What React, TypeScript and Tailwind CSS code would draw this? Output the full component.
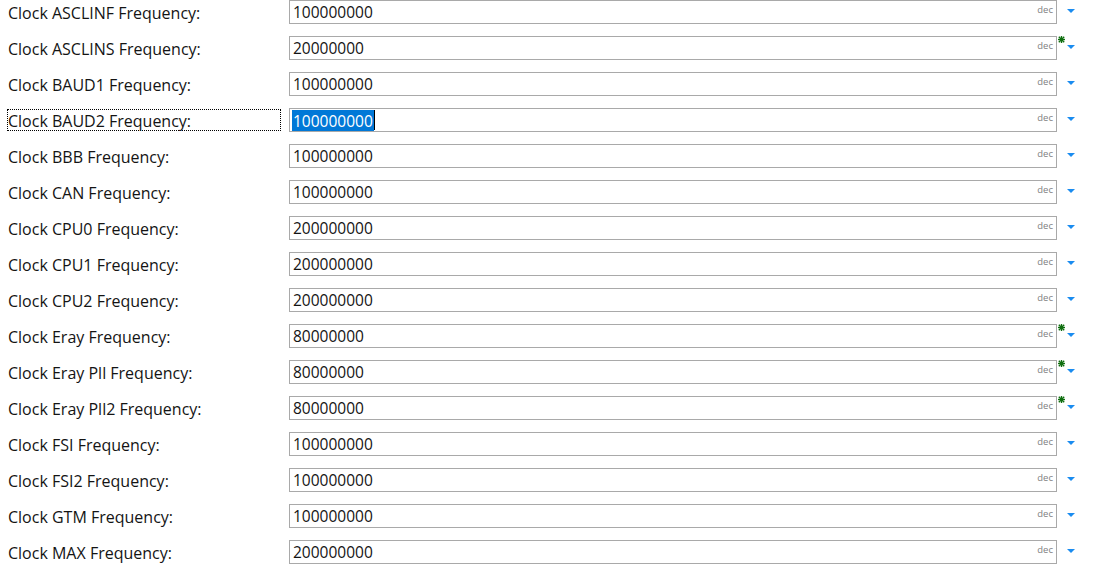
import React from "react";

const rows: { label: string; value: string; star?: boolean; focus?: boolean }[] = [
  { label: "Clock ASCLINF Frequency:", value: "100000000" },
  { label: "Clock ASCLINS Frequency:", value: "20000000", star: true },
  { label: "Clock BAUD1 Frequency:", value: "100000000" },
  { label: "Clock BAUD2 Frequency:", value: "100000000", focus: true },
  { label: "Clock BBB Frequency:", value: "100000000" },
  { label: "Clock CAN Frequency:", value: "100000000" },
  { label: "Clock CPU0 Frequency:", value: "200000000" },
  { label: "Clock CPU1 Frequency:", value: "200000000" },
  { label: "Clock CPU2 Frequency:", value: "200000000" },
  { label: "Clock Eray Frequency:", value: "80000000", star: true },
  { label: "Clock Eray Pll Frequency:", value: "80000000", star: true },
  { label: "Clock Eray Pll2 Frequency:", value: "80000000", star: true },
  { label: "Clock FSI Frequency:", value: "100000000" },
  { label: "Clock FSI2 Frequency:", value: "100000000" },
  { label: "Clock GTM Frequency:", value: "100000000" },
  { label: "Clock MAX Frequency:", value: "200000000" },
];

function Star() {
  return (
    <svg width="7" height="7" viewBox="0 0 7 7" className="block">
      <g stroke="#0f6e0f" strokeWidth="1.4" strokeLinecap="square">
        <line x1="3.5" y1="0.5" x2="3.5" y2="6.5" />
        <line x1="0.5" y1="3.5" x2="6.5" y2="3.5" />
        <line x1="1.3" y1="1.3" x2="5.7" y2="5.7" />
        <line x1="5.7" y1="1.3" x2="1.3" y2="5.7" />
      </g>
    </svg>
  );
}

function Arrow() {
  return (
    <svg width="8" height="4" viewBox="0 0 8 4" className="block">
      <polygon points="0,0 8,0 4,4" fill="#1a8cf0" />
    </svg>
  );
}

export default function App() {
  return (
    <div
      className="w-[1101px] h-[571px] overflow-hidden bg-white text-[#141414]"
      style={{ fontFamily: '"Open Sans", "Noto Sans", sans-serif' }}
    >
      {rows.map((r, i) => (
        <div key={i} className="flex h-[36px] items-start">
          <div
            className={`ml-[7px] mt-[1px] h-[22px] w-[274px] flex items-center border border-dotted ${
              r.focus ? "border-black" : "border-transparent"
            }`}
          >
            <span className="mt-[2px] text-[16px] leading-none whitespace-nowrap">{r.label}</span>
          </div>
          <div className="ml-[8px] h-[24px] w-[768px] border border-[#a9a9a9] flex items-center relative">
            {r.focus ? (
              <span className="ml-[2px] flex items-center">
                <span className="bg-[#0078d7] text-white text-[15.5px] leading-[20px] pl-[1px] pr-[1px] pt-[1px]">{r.value}</span>
                <span className="w-[1px] h-[20px] bg-black" />
              </span>
            ) : (
              <span className="ml-[3px] mt-[2px] text-[15.5px] leading-none">{r.value}</span>
            )}
            <span className="absolute right-[3px] top-[4px] text-[9.5px] leading-none text-[#7f7f7f]">dec</span>
          </div>
          <div className="relative w-[40px] h-[24px]">
            {r.star && (
              <div className="absolute left-[1px] top-0">
                <Star />
              </div>
            )}
            <div className="absolute left-[10px] top-[9px]">
              <Arrow />
            </div>
          </div>
        </div>
      ))}
    </div>
  );
}
